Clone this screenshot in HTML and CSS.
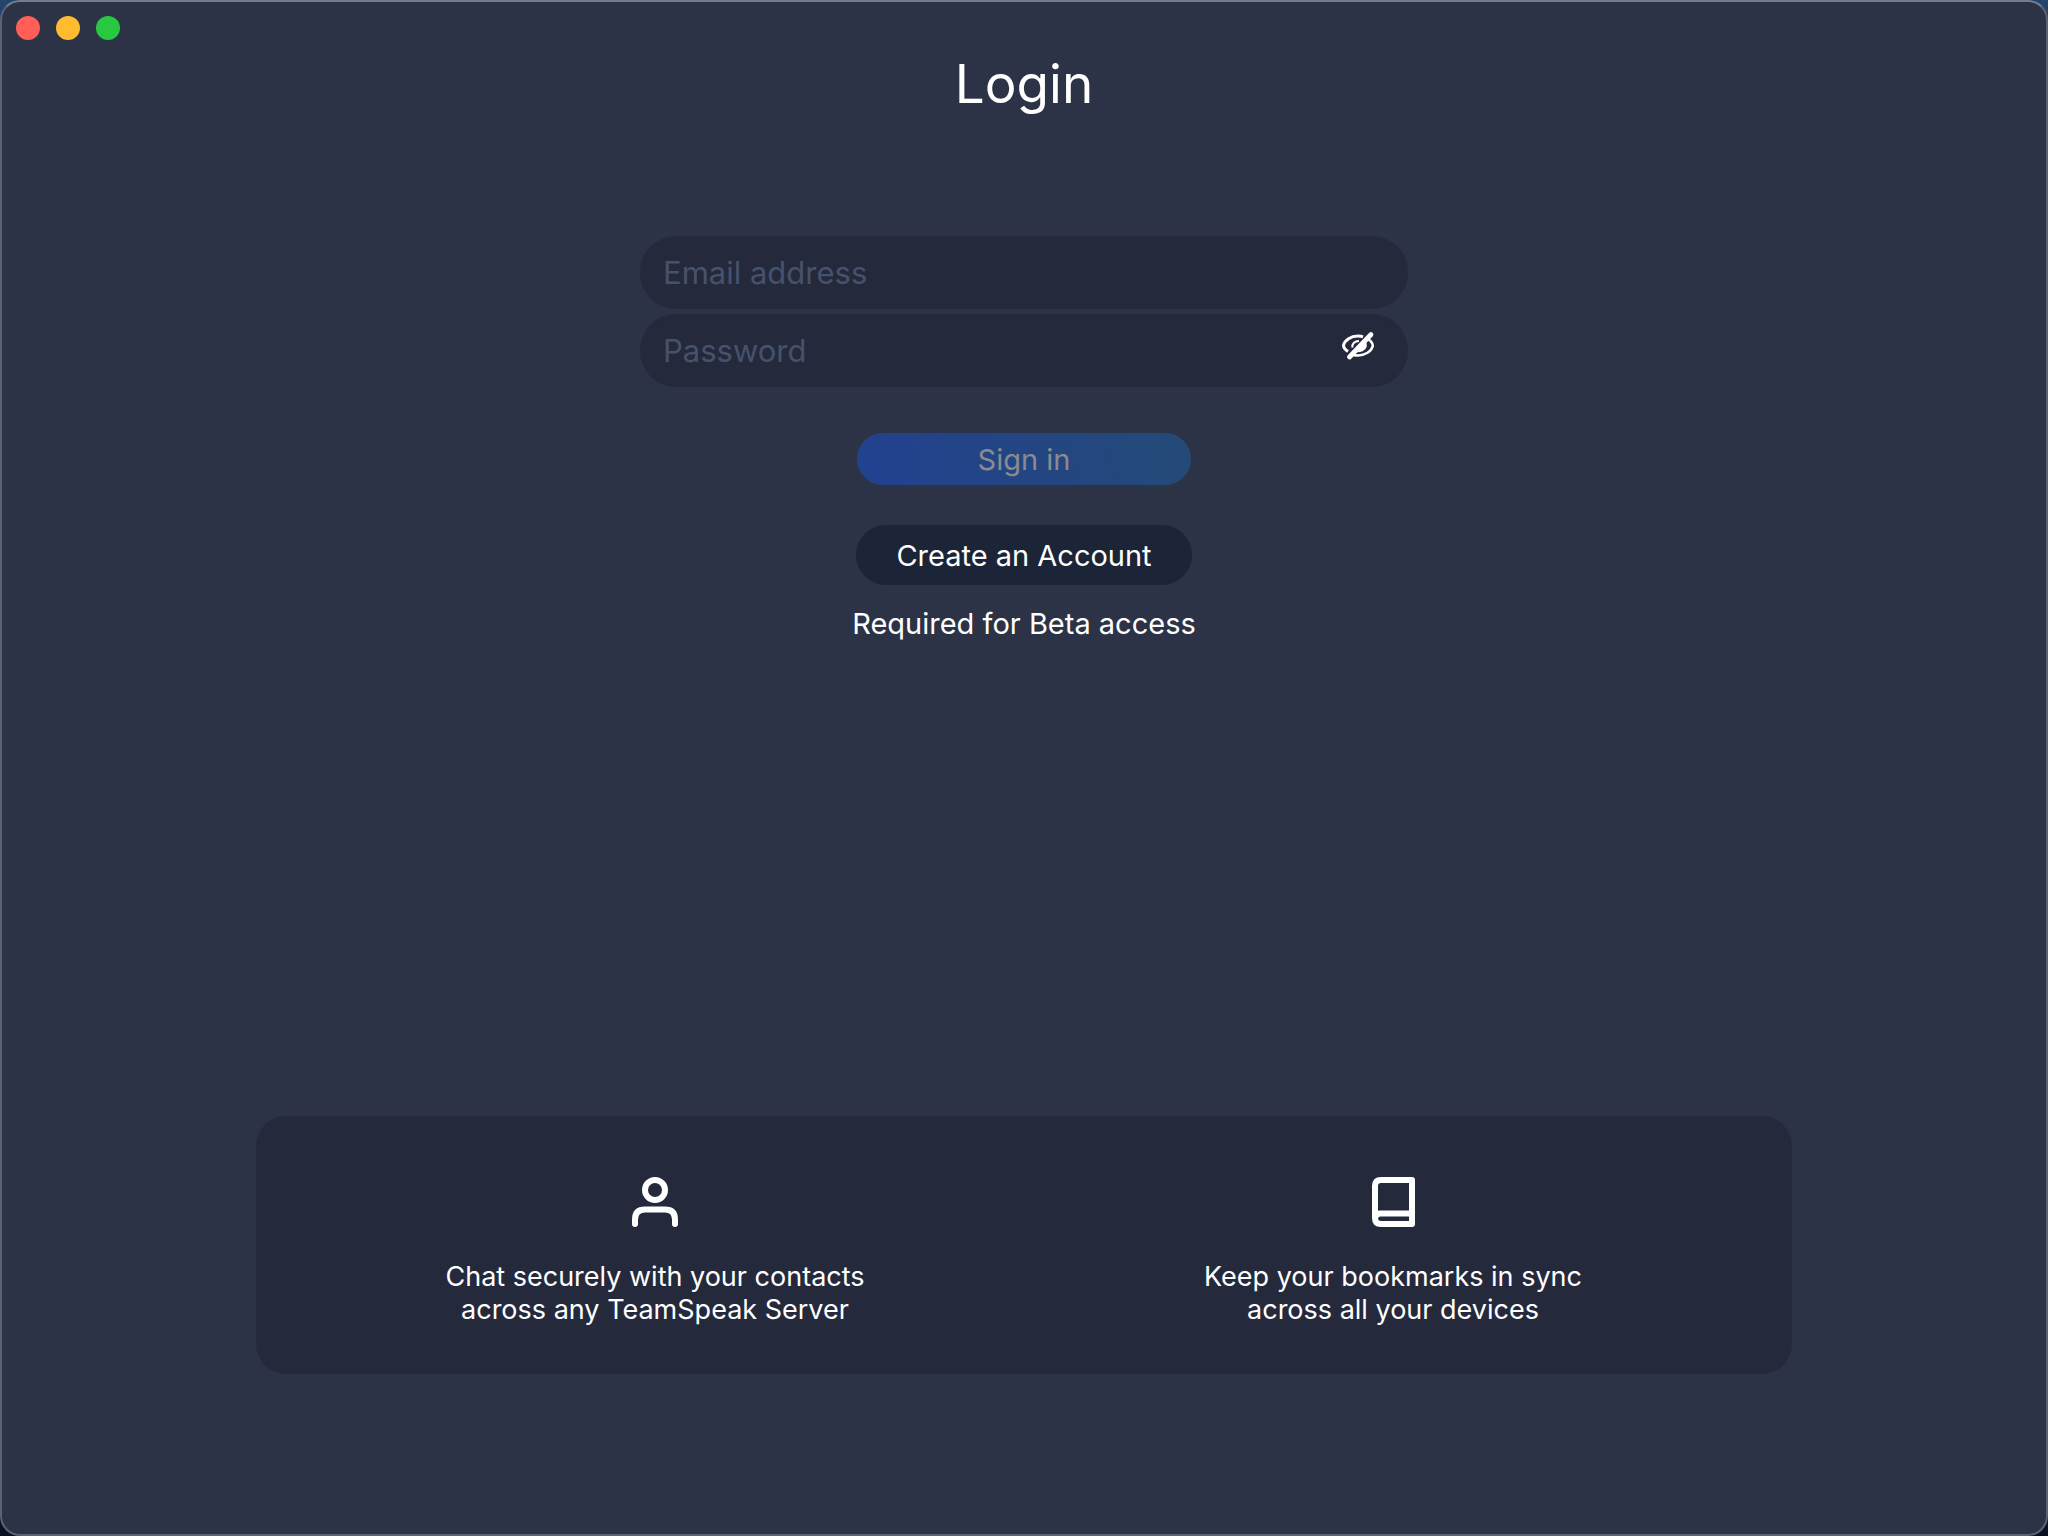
FILE: index.html
```
<!DOCTYPE html>
<html lang="en">
<head>
    <meta charset="UTF-8">
    <meta name="viewport" content="width=device-width, initial-scale=1.0">
    <title>Login</title>
    <link rel="stylesheet" href="styles.css">
</head>
<body>
    <div class="window">
        <!-- Window controls -->
        <div class="titlebar">
            <button class="dot close" aria-label="Close"></button>
            <button class="dot minimize" aria-label="Minimize"></button>
            <button class="dot zoom" aria-label="Zoom"></button>
        </div>

        <!-- Login form -->
        <main class="login">
            <h1>Login</h1>
            <form class="login-form">
                <input class="field" type="email" placeholder="Email address" aria-label="Email address">
                <div class="password">
                    <input class="field" type="password" placeholder="Password" aria-label="Password">
                    <button type="button" class="toggle" aria-label="Show password">
                        <svg viewBox="0 0 36 32" width="36" height="32" fill="none" stroke="#fff">
                            <path d="M8 21.500C5 19.500 3.500 17.500 3.500 15.500C4.500 10 11 6 18 6C20 6 21.500 6.200 23 6.800" stroke-width="3"/>
                            <path d="M28 9C31 11 32.800 13.500 32.800 16C31.500 21.500 25 25.500 18 25.500C16 25.500 15 25.400 13.500 25" stroke-width="2.500"/>
                            <path d="M12.500 17.500C11.500 14 14.500 11 19 11" stroke-width="2"/>
                            <path d="M25.500 11C29.500 17 24 23.500 15 22Z" fill="#fff" stroke="none"/>
                            <path d="M9.500 27L31 4.500" stroke-width="4.800" stroke-linecap="round"/>
                        </svg>
                    </button>
                </div>
                <button type="submit" class="btn sign-in" disabled>Sign in</button>
                <button type="button" class="btn create">Create an Account</button>
            </form>
            <p class="note">Required for Beta access</p>
        </main>

        <!-- Features -->
        <section class="features">
            <div class="feature">
                <svg viewBox="0 0 64 64" width="64" height="64" fill="none" stroke="#fff" stroke-width="6" stroke-linecap="round">
                    <circle cx="32" cy="20" r="10"/>
                    <path d="M12 54V49.500Q12 39.500 22 39.500H42Q52 39.500 52 49.500V54"/>
                </svg>
                <p>Chat securely with your contacts<br>across any TeamSpeak Server</p>
            </div>
            <div class="feature">
                <svg viewBox="0 0 64 64" width="64" height="64" fill="none" stroke="#fff" stroke-width="6" stroke-linejoin="round">
                    <path d="M51 10H20Q14 10 14 16V48Q14 54 20 54H51Z"/>
                    <path d="M14 49Q14 43.500 19 43.500H51"/>
                </svg>
                <p>Keep your bookmarks in sync<br>across all your devices</p>
            </div>
        </section>
    </div>
</body>
</html>
```
FILE: styles.css
```
* {
    margin: 0;
    padding: 0;
    box-sizing: border-box;
}
body {
    font-family: Inter, "Liberation Sans", sans-serif;
    color: #fff;
    background: linear-gradient(#24446b, #06121f);
}
button, input {
    font-family: inherit;
    border: none;
    outline: none;
}
.window {
    display: flex;
    flex-direction: column;
    min-height: 100vh;
    background: #2d3346;
    border: 2px solid #5d6271;
    border-top-color: #777c89;
    border-radius: 20px;
    overflow: hidden;
}
.titlebar {
    display: flex;
    gap: 16px;
    padding: 14px;
}
.dot {
    width: 24px;
    height: 24px;
    border-radius: 50%;
}
.close {
    background: #ff5f57;
}
.minimize {
    background: #febc2e;
}
.zoom {
    background: #28c840;
}
.login {
    display: flex;
    flex-direction: column;
    align-items: center;
}
h1 {
    font-size: 53px;
    font-weight: 400;
    line-height: 60px;
}
.login-form {
    display: flex;
    flex-direction: column;
    align-items: center;
    width: 768px;
    max-width: 90%;
    padding-top: 122px;
}
.field {
    width: 100%;
    height: 73px;
    padding: 0 23px;
    border-radius: 36px;
    background: #242a3c;
    color: #fff;
    font-size: 31px;
}
.field::placeholder {
    color: #46526c;
    opacity: 1;
}
.password {
    position: relative;
    width: 100%;
    height: 73px;
    margin-top: 5px;
}
/* Eye icon sits over the password field */
.toggle {
    position: absolute;
    top: 16px;
    right: 32px;
    width: 36px;
    height: 32px;
    background: none;
    cursor: pointer;
}
.btn {
    border-radius: 30px;
    font-size: 29px;
    cursor: pointer;
}
.sign-in {
    width: 334px;
    height: 52px;
    margin-top: 46px;
    background: linear-gradient(72deg, #224190, #244a77);
    color: #898b90;
}
.create {
    width: 336px;
    height: 60px;
    margin-top: 40px;
    background: #1c2437;
    color: #fff;
}
.note {
    margin-top: 20px;
    font-size: 29px;
    line-height: 38px;
}
.features {
    display: flex;
    width: 75vw;
    margin: auto auto 160px;
    padding: 54px 30px 48px;
    border-radius: 30px;
    background: #242a3c;
}
.feature {
    flex: 1;
    display: flex;
    flex-direction: column;
    align-items: center;
    gap: 26px;
    font-size: 27px;
    line-height: 33px;
    text-align: center;
}
```
